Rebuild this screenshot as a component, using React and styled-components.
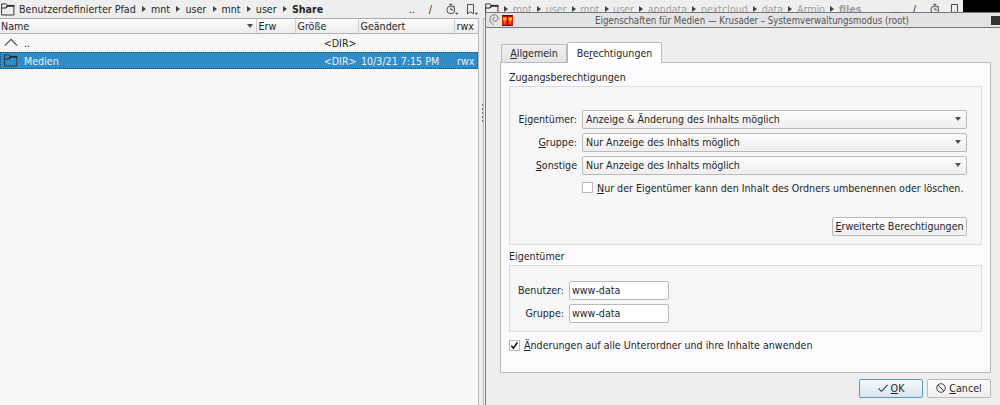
import styled, { createGlobalStyle, css } from "styled-components";

const Colors = {
  window: "#eeeeee",
  view: "#f7f7f7",
  text: "#232726",
  select: "#308cc6",
  line: "#b9b9b9",
};

const App = () => {
  return (
    <Desktop>
      <GlobalStyle />
      <LeftPanel>
        <PathBar>
          <FolderIcon />
          <Crumbs path={["Benutzerdefinierter Pfad", "mnt", "user", "mnt", "user", "Share"]} />
          <PathTools />
        </PathBar>
        <FileList>
          <HeaderRow>
            <HeadCell>
              Name
              <Triangle />
            </HeadCell>
            <HeadCell>Erw</HeadCell>
            <HeadCell>Größe</HeadCell>
            <HeadCell>Geändert</HeadCell>
            <HeadCell>rwx</HeadCell>
          </HeaderRow>
          <FileRow>
            <NameCell>
              <UpIcon />
              ..
            </NameCell>
            <Cell />
            <Cell $right>&lt;DIR&gt;</Cell>
            <Cell />
            <Cell />
          </FileRow>
          <FileRow $selected>
            <NameCell>
              <FolderIcon />
              Medien
            </NameCell>
            <Cell />
            <Cell $right>&lt;DIR&gt;</Cell>
            <Cell>10/3/21 7:15 PM</Cell>
            <Cell>rwx</Cell>
          </FileRow>
        </FileList>
      </LeftPanel>
      <Splitter>
        <Grip />
      </Splitter>
      <RightPanel>
        <PathBar $dim>
          <FolderIcon />
          <Crumbs
            $tight
            path={["", "mnt", "user", "mnt", "user", "appdata", "nextcloud", "data", "Armin", "files"]}
          />
          <PathTools />
        </PathBar>
        <Backdrop />
      </RightPanel>
      <PropertiesDialog />
    </Desktop>
  );
};

const Crumbs = ({ path, $tight }) => (
  <CrumbList $tight={$tight}>
    {path.map((name, i) => (
      <Crumb key={i} $current={i === path.length - 1}>
        {i > 0 && <Arrow $tight={$tight} />}
        {name}
      </Crumb>
    ))}
  </CrumbList>
);

const PathTools = () => (
  <Tools>
    <span>..</span>
    <span>/</span>
    <ClockIcon />
    <BookmarkIcon />
  </Tools>
);

const PropertiesDialog = () => (
  <Dialog>
    <TitleBar>
      <SwirlIcon />
      <AppIcon />
      <Title>Eigenschaften für Medien — Krusader – Systemverwaltungsmodus (root)</Title>
      <WindowButton />
    </TitleBar>
    <Tabs>
      <Tab>
        <span><u>A</u>llgemein</span>
      </Tab>
      <Tab $active>
        <span>Be<u>r</u>echtigungen</span>
      </Tab>
    </Tabs>
    <Page>
      <GroupTitle>Zugangsberechtigungen</GroupTitle>
      <AccessGroup>
        <FormRow>
          <Label>E<u>i</u>gentümer:</Label>
          <Select>
            Anzeige &amp; Änderung des Inhalts möglich
            <Triangle />
          </Select>
        </FormRow>
        <FormRow>
          <Label><u>G</u>ruppe:</Label>
          <Select>
            Nur Anzeige des Inhalts möglich
            <Triangle />
          </Select>
        </FormRow>
        <FormRow>
          <Label><u>S</u>onstige</Label>
          <Select>
            Nur Anzeige des Inhalts möglich
            <Triangle />
          </Select>
        </FormRow>
        <StickyRow>
          <Box />
          <span><u>N</u>ur der Eigentümer kann den Inhalt des Ordners umbenennen oder löschen.</span>
        </StickyRow>
        <AdvancedButton>
          <span><u>E</u>rweiterte Berechtigungen</span>
        </AdvancedButton>
      </AccessGroup>
      <GroupTitle $second>Eigentümer</GroupTitle>
      <OwnerGroup>
        <FormRow>
          <Label $narrow>Benutzer:</Label>
          <Input defaultValue="www-data" />
        </FormRow>
        <FormRow>
          <Label $narrow>Gruppe:</Label>
          <Input defaultValue="www-data" />
        </FormRow>
      </OwnerGroup>
      <ApplyRow>
        <Box>
          <CheckMark />
        </Box>
        <span><u>Ä</u>nderungen auf alle Unterordner und ihre Inhalte anwenden</span>
      </ApplyRow>
    </Page>
    <Footer>
      <DialogButton $primary>
        <OkIcon />
        <span><u>O</u>K</span>
      </DialogButton>
      <DialogButton>
        <CancelIcon />
        <span><u>C</u>ancel</span>
      </DialogButton>
    </Footer>
  </Dialog>
);

// icons
const FolderIcon = () => (
  <svg width="14" height="13" viewBox="0 0 14 13" fill="none">
    <path d="M.6 12V.9h4.600l1.300 1.500h6.400V12z" stroke="#33393a" />
    <path d="M6 2h7.400v1.700H7L5 5.600H.8V4.500h3.600z" fill="#252a2b" />
  </svg>
);
const UpIcon = () => (
  <svg width="14" height="13" viewBox="0 0 14 13" fill="none">
    <path d="M.8 9.600L7 3.300l6.200 6.300" stroke="#454b4c" strokeWidth="1.100" />
  </svg>
);
const ClockIcon = () => (
  <svg width="13" height="13" viewBox="0 0 13 13" fill="none" stroke="#4a4f50">
    <circle cx="4.800" cy="6.800" r="3.900" />
    <path d="M4.800 2.900V1.300M3.200 1.300h3.200M4.800 6.800V4.500M4.800 6.800h2.500M7.400 2.800l1.500 1.400" />
    <path d="M9 9.800h3.400l-1.700 2z" fill="#3a3f40" stroke="none" />
  </svg>
);
const BookmarkIcon = () => (
  <svg width="13" height="13" viewBox="0 0 13 13" fill="none" stroke="#4a4f50">
    <path d="M1.500 1.500h6v9.400L4.500 8.800l-3 2.100z" />
    <path d="M8.600 9.800h3.400l-1.700 2z" fill="#3a3f40" stroke="none" />
  </svg>
);
const SwirlIcon = () => (
  <svg width="10" height="12" viewBox="0 0 10 12" fill="none" stroke="#77797b">
    <path d="M4.300 10.800C2 9.400.8 7.200 1 4.800 1.300 2.400 3 .8 5.200.8c2.300 0 3.900 1.500 3.700 3.500C8.800 6.200 7.400 7.400 5.900 7.200 4.400 7.100 3.700 5.900 4 4.700c.3-1 1.300-1.400 2.200-1.100" />
  </svg>
);
const AppIcon = () => (
  <svg width="11" height="11" viewBox="0 0 11 11">
    <path d="M0 0h11v11H0z" fill="#4a1930" />
    <path d="M0 1.500h5v8.500H0zM6 1.500h5v8.500H6z" fill="#ee1c0c" />
    <path d="M1 2.500h3.500v3H1zM6.500 2.500H10v3H6.500z" fill="#ffc91c" />
    <path d="M2.200 5.500h1.300v3H2.200zM7.500 5.500h1.300v3H7.500z" fill="#ff8f14" />
  </svg>
);
const CheckMark = () => (
  <svg width="9" height="9" viewBox="0 0 9 9" fill="none">
    <path d="M1.300 4.800L3.500 7.200 7.400 1.400" stroke="#111" strokeWidth="1.700" />
  </svg>
);
const OkIcon = () => (
  <svg width="10" height="8" viewBox="0 0 10 8" fill="none">
    <path d="M.5 4.400l2.900 2.900L9.600.8" stroke="#3c4042" strokeWidth="1.100" />
  </svg>
);
const CancelIcon = () => (
  <svg width="10" height="10" viewBox="0 0 10 10" fill="none" stroke="#3c4042">
    <circle cx="5" cy="5" r="4.300" />
    <path d="M2 2l6 6" />
  </svg>
);

// styles
const GlobalStyle = createGlobalStyle`
  * {
    box-sizing: border-box;
  }
  body {
    margin: 0;
    overflow: hidden;
    font: 10.6px "DejaVu Sans Condensed", "DejaVu Sans", sans-serif;
    font-stretch: condensed;
    color: ${Colors.text};
  }
  svg {
    display: block;
    flex-shrink: 0;
  }
  u {
    text-underline-offset: 1px;
    text-decoration-skip-ink: none;
  }
`;

const Desktop = styled.div`
  position: relative;
  display: flex;
  width: 1000px;
  height: 405px;
  overflow: hidden;
  background: ${Colors.window};
  white-space: nowrap;
`;

const LeftPanel = styled.section`
  display: flex;
  flex-direction: column;
  width: 479px;
`;

const PathBar = styled.div`
  display: flex;
  align-items: center;
  height: 18px;
  padding: 0 0 0 1px;
  ${({ $dim }) =>
    $dim &&
    css`
      width: 480px;
      padding-left: 2px;
      color: #a0a0a0;
    `}
`;

const CrumbList = styled.div`
  display: flex;
  flex: 1;
  padding-left: ${({ $tight }) => ($tight ? "0" : "4px")};
`;

const Crumb = styled.span`
  display: flex;
  align-items: center;
  font-weight: ${({ $current }) => ($current ? "bold" : "normal")};
`;

const Arrow = styled.i`
  margin: ${({ $tight }) => ($tight ? "0 4.5px 0 5.3px" : "0 5px 0 6.3px")};
  border: solid transparent;
  border-width: 3px 0 3px 4px;
  border-left-color: #3d4441;
`;

const Tools = styled.div`
  display: flex;
  align-items: center;
  gap: 14px;
  span {
    color: ${Colors.text};
  }
  svg + svg {
    margin-left: -7px;
  }
`;

const FileList = styled.div`
  flex: 1;
  background: ${Colors.view};
  border-top: 1px solid #aaa;
  border-right: 1px solid ${Colors.line};
`;

const columns = css`
  display: grid;
  grid-template-columns: 257px 39px 63px 96px 23px;
`;

const HeaderRow = styled.div`
  ${columns}
  height: 15px;
  background: linear-gradient(#fdfbfd, #ececec);
  border-bottom: 1px solid #b4b4b4;
`;

const HeadCell = styled.div`
  display: flex;
  align-items: center;
  justify-content: space-between;
  padding: 0 3px 1px 1.5px;
  border-right: 1px solid #ccc;
  &:first-child {
    padding-left: 1px;
  }
  &:last-child {
    border: 0;
  }
`;

const Triangle = styled.i`
  border: solid transparent;
  border-width: 4px 3px 0;
  border-top-color: #4c5052;
`;

const FileRow = styled.div`
  ${columns}
  height: 17px;
  margin-top: ${({ $selected }) => ($selected ? "1px" : "0")};
  ${({ $selected }) =>
    $selected &&
    css`
      color: #e9f3f9;
      background: ${Colors.select};
      outline: 1px dotted #174f73;
      outline-offset: -1px;
    `}
`;

const Cell = styled.div`
  display: flex;
  align-items: center;
  justify-content: ${({ $right }) => ($right ? "flex-end" : "flex-start")};
  padding: 0 2.5px 0 2px;
`;

const NameCell = styled(Cell)`
  gap: 6px;
  padding-left: 4px;
`;

const Splitter = styled.div`
  display: flex;
  align-items: center;
  width: 4px;
  height: 226px;
`;

const Grip = styled.i`
  width: 3px;
  height: 18px;
  margin-left: 3px;
  border-left: 2px dotted #777;
`;

const RightPanel = styled.section`
  flex: 1;
  background: linear-gradient(90deg, ${Colors.window} 480px, #000 480px);
`;

const Backdrop = styled.div`
  height: 387px;
  background: ${Colors.view};
  border: solid ${Colors.line};
  border-width: 1px 0 0 1px;
`;

const Dialog = styled.div`
  position: absolute;
  top: 12px;
  left: 485px;
  width: 520px;
  height: 400px;
  border: 1px solid #777;
  background: ${Colors.window};
`;

const TitleBar = styled.div`
  display: flex;
  align-items: center;
  width: 514px;
  height: 15px;
  padding-left: 3px;
  gap: 3px;
  background: #e3e2e4;
  border-bottom: 1px solid #777;
`;

const Title = styled.span`
  flex: 1;
  color: #555;
  font-size: 9.6px;
  text-align: center;
`;

const WindowButton = styled.i`
  width: 9px;
  height: 9px;
  background: #333;
`;

const Tabs = styled.div`
  display: flex;
  align-items: flex-end;
  height: 34px;
  padding-left: 15px;
`;

const Tab = styled.div`
  display: flex;
  align-items: center;
  justify-content: center;
  width: ${({ $active }) => ($active ? "95px" : "66px")};
  height: ${({ $active }) => ($active ? "21px" : "18px")};
  padding-bottom: ${({ $active }) => ($active ? "0" : "1px")};
  margin-bottom: ${({ $active }) => ($active ? "-1px" : "0")};
  background: ${({ $active }) => ($active ? "#fff" : "linear-gradient(#f1edf1, #e6e4e6)")};
  border: 1px solid ${Colors.line};
  border-bottom: 0;
  border-radius: 2px 2px 0 0;
  z-index: ${({ $active }) => ($active ? 1 : 0)};
`;

const Page = styled.div`
  width: 491px;
  height: 311px;
  margin-left: 14px;
  padding: 8px 8px 0;
  background: #fdfafe;
  border: 1px solid ${Colors.line};
`;

const GroupTitle = styled.div`
  height: 15px;
  line-height: 13px;
  margin-top: ${({ $second }) => ($second ? "5px" : "0")};
`;

const Group = styled.div`
  display: flex;
  flex-direction: column;
  width: 473px;
  background: #f6f6f6;
  border: 1px solid #dcdcdc;
`;

const AccessGroup = styled(Group)`
  height: 159px;
  padding: 23px 14px 0 0;
  gap: 4px;
`;

const OwnerGroup = styled(Group)`
  height: 67px;
  padding: 15px 0 0;
  gap: 4px;
`;

const FormRow = styled.div`
  display: flex;
  align-items: center;
  height: 19px;
  gap: 5px;
`;

const Label = styled.label`
  display: flex;
  justify-content: flex-end;
  width: ${({ $narrow }) => ($narrow ? "54px" : "67px")};
  padding-bottom: 1px;
`;

const Select = styled.div`
  display: flex;
  align-items: center;
  justify-content: space-between;
  flex: 1;
  height: 19px;
  padding: 0 5px 1px 3px;
  background: linear-gradient(#fdfdfd, #efedef);
  border: 1px solid ${Colors.line};
  border-radius: 2px;
`;

const StickyRow = styled.div`
  display: flex;
  align-items: center;
  gap: 4px;
  height: 13px;
  margin: 2px 0 0 72px;
`;

const Box = styled.i`
  display: flex;
  align-items: center;
  justify-content: center;
  width: 11px;
  height: 11px;
  background: #fff;
  border: 1px solid ${Colors.line};
`;

const Button = styled.button`
  display: flex;
  align-items: center;
  justify-content: center;
  height: 19px;
  padding: 0 0 1px;
  font: inherit;
  color: inherit;
  background: linear-gradient(#fdfdfd, #f0eef0);
  border: 1px solid ${Colors.line};
  border-radius: 2px;
`;

const AdvancedButton = styled(Button)`
  width: 135px;
  margin: 19px 0 0 auto;
`;

const Input = styled.input`
  width: 100px;
  height: 19px;
  padding: 0 2px 1px;
  font: inherit;
  color: inherit;
  background: #fff;
  border: 1px solid ${Colors.line};
  border-radius: 2px;
`;

const ApplyRow = styled.div`
  display: flex;
  align-items: center;
  gap: 4px;
  height: 12px;
  margin-top: 7px;
`;

const Footer = styled.div`
  display: flex;
  justify-content: flex-end;
  width: 505px;
  gap: 4px;
  padding-top: 6px;
`;

const DialogButton = styled(Button)`
  width: 64px;
  gap: 3px;
  ${({ $primary }) =>
    $primary &&
    css`
      background: linear-gradient(#f7fafc, #d9e4ee);
      border-color: #5799bf;
    `}
`;

export default App;
